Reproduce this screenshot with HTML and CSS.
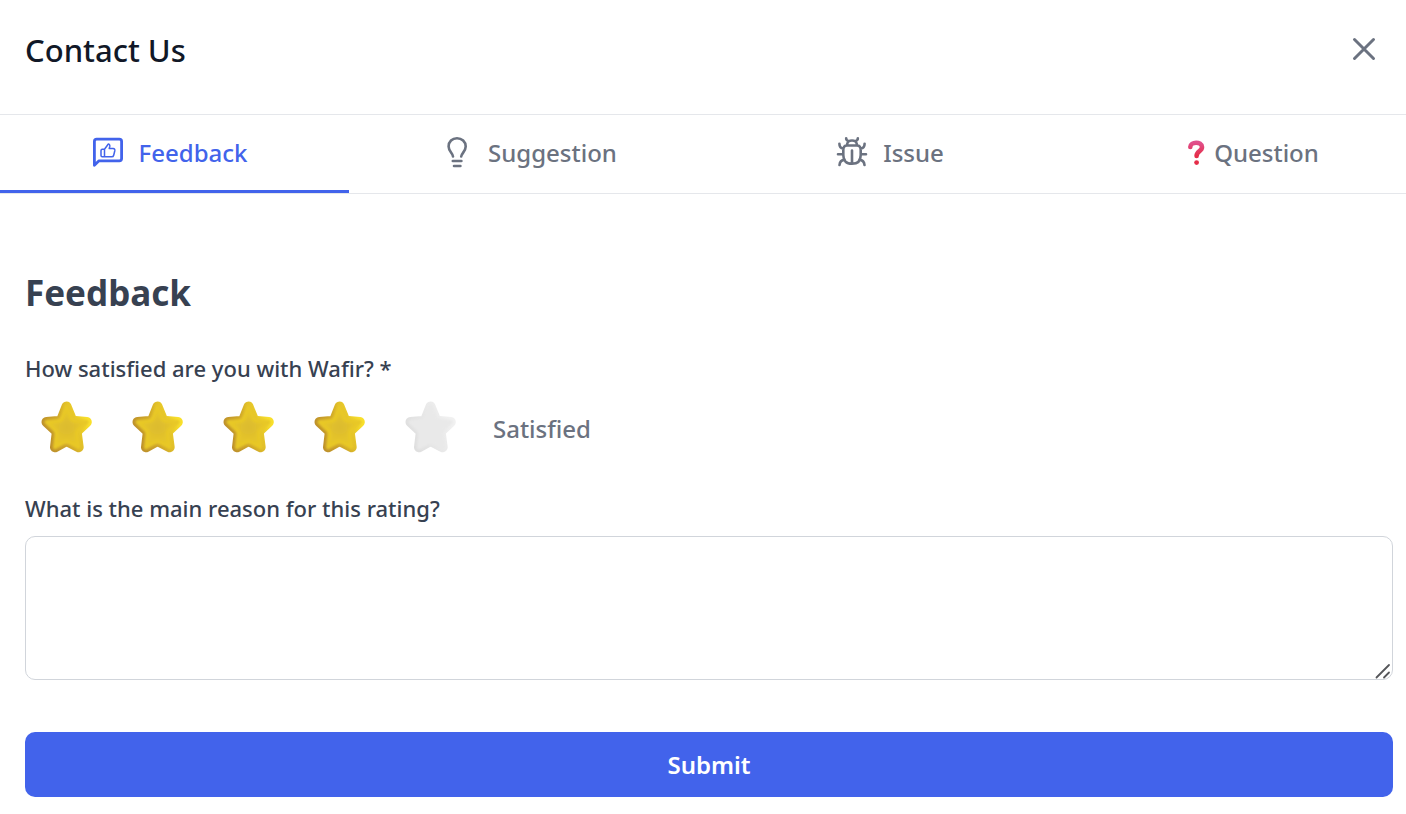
FILE: index.html
```
<!DOCTYPE html>
<html lang="en">
<head>
    <meta charset="UTF-8">
    <meta name="viewport" content="width=device-width, initial-scale=1.0">
    <title>Contact Us</title>
    <link rel="stylesheet" href="styles.css">
</head>
<body>
    <!-- Shared star shape -->
    <svg class="defs" width="0" height="0" aria-hidden="true">
        <defs>
            <linearGradient id="gold-edge" x1="0" y1="0.7" x2="1" y2="0.3">
                <stop offset="0" stop-color="#bd902c"/>
                <stop offset="0.5" stop-color="#d4ae2a"/>
                <stop offset="1" stop-color="#f9e02c"/>
            </linearGradient>
            <radialGradient id="gold-face">
                <stop offset="0" stop-color="#dcbb30"/>
                <stop offset="1" stop-color="#e8c827"/>
            </radialGradient>
            <linearGradient id="grey-edge" x1="0" y1="0.7" x2="1" y2="0.3">
                <stop offset="0" stop-color="#dfdfdf"/>
                <stop offset="1" stop-color="#f1f1f1"/>
            </linearGradient>
            <linearGradient id="mark-red" x1="0" y1="0" x2="0" y2="1">
                <stop offset="0" stop-color="#e0508c"/>
                <stop offset="1" stop-color="#e52d48"/>
            </linearGradient>
            <filter id="soften" x="-20%" y="-20%" width="140%" height="140%">
                <feGaussianBlur stdDeviation="1.3"/>
            </filter>
            <path id="star-shape" stroke-linejoin="round" d="M25.500 6.500L30 17.500Q31.200 20.700 34.500 21L45.800 22L37.800 29.500Q35.500 31.600 36 34.500L37.700 47.300L28 42.300Q25.500 41.200 23 42.300L14 47.300L15.500 34.500Q15.800 31.600 13.500 29.500L5.500 22L17 21Q20 20.700 21.200 17.500Z"/>
            <symbol id="star-gold" viewBox="0 0 52 54">
                <use href="#star-shape" fill="url(#gold-edge)" stroke="url(#gold-edge)" stroke-width="10"/>
                <use href="#star-shape" fill="url(#gold-face)" stroke="#e8c827" stroke-width="4" filter="url(#soften)"/>
            </symbol>
            <symbol id="star-grey" viewBox="0 0 52 54">
                <use href="#star-shape" fill="url(#grey-edge)" stroke="url(#grey-edge)" stroke-width="10"/>
                <use href="#star-shape" fill="#e9e9e9" stroke="#e9e9e9" stroke-width="4" filter="url(#soften)"/>
            </symbol>
        </defs>
    </svg>

    <header class="header">
        <h1>Contact Us</h1>
        <button class="close-btn" type="button" aria-label="Close">
            <svg width="24" height="24" viewBox="0 0 24 24" fill="none" stroke="currentColor" stroke-width="3" stroke-linecap="round">
                <path d="M2.500 2.500l19 19M21.500 2.500l-19 19"/>
            </svg>
        </button>
    </header>

    <nav class="tabs">
        <button class="tab active" type="button">
            <svg width="32" height="32" viewBox="0 0 32 32" fill="none" stroke="currentColor" stroke-linecap="round" stroke-linejoin="round">
                <path stroke-width="2.800" d="M2.400 29.200V5.500Q2.400 3.200 4.700 3.200H27.300Q29.600 3.200 29.600 5.500V22.500Q29.600 24.800 27.300 24.800H7Z"/>
                <path stroke-width="1.500" d="M12.500 13.200H10.200Q9 13.200 9 14.400V19.600Q9 20.800 10.200 20.800H12.500ZM12.500 13.200L15.800 8.700Q16.200 7.600 17.200 8.300Q18 9 17.800 10.200L17.200 12.600H21.200Q23.200 12.800 22.800 14.700L21.700 19.200Q21.300 20.800 19.700 20.800H12.500"/>
            </svg>
            <span>Feedback</span>
        </button>
        <button class="tab" type="button">
            <svg width="32" height="32" viewBox="0 0 32 32" fill="none" stroke="currentColor" stroke-width="2.600" stroke-linecap="round" stroke-linejoin="round">
                <path d="M12 20.500C12 17.500 7.600 15.500 7.600 10.500C7.600 5.600 11.200 2.200 16 2.200S24.700 5.600 24.700 10.500C24.700 15.500 20.300 17.500 20.200 20.500M11.800 25H20.400M13 30H19.400"/>
            </svg>
            <span>Suggestion</span>
        </button>
        <button class="tab" type="button">
            <svg width="32" height="32" viewBox="0 0 32 32" fill="none" stroke="currentColor" stroke-width="2.600" stroke-linecap="round" stroke-linejoin="round">
                <path d="M11 9.500H21Q24.700 9.500 24.700 14V19Q24.700 27.800 16 27.800T7.300 19V14Q7.300 9.500 11 9.500ZM11 9.200C11 2.900 21 2.900 21 9.200M10.200 2.200Q10 4.300 12.300 5M21.800 2.200Q22 4.300 19.700 5M16 14.500V27.500M7.300 18.300H2M24.700 18.300H30M7.300 12.500Q3.400 12 3.400 7.700M24.700 12.500Q28.600 12 28.600 7.700M8.600 23.600Q3.900 24.200 3.500 29M23.400 23.600Q28.100 24.200 28.500 29"/>
            </svg>
            <span>Issue</span>
        </button>
        <button class="tab tab-question" type="button">
            <svg width="20" height="28" viewBox="0 0 20 28" fill="none">
                <path stroke="url(#mark-red)" stroke-width="4.600" stroke-linecap="round" stroke-linejoin="round" d="M4.300 9C4.300 3.400 15.800 3.200 16 9C16.100 13.300 10.600 13 10.600 18"/>
                <circle cx="10.600" cy="24.600" r="2.400" fill="#e52d48"/>
            </svg>
            <span>Question</span>
        </button>
    </nav>

    <form class="form">
        <h2>Feedback</h2>

        <fieldset class="rating">
            <legend>How satisfied are you with Wafir? *</legend>
            <div class="rating-row">
                <div class="stars">
                    <label class="star"><input type="radio" name="rating" value="1" aria-label="1 star"><svg><use href="#star-gold"/></svg></label>
                    <label class="star"><input type="radio" name="rating" value="2" aria-label="2 stars"><svg><use href="#star-gold"/></svg></label>
                    <label class="star"><input type="radio" name="rating" value="3" aria-label="3 stars"><svg><use href="#star-gold"/></svg></label>
                    <label class="star"><input type="radio" name="rating" value="4" aria-label="4 stars" checked><svg><use href="#star-gold"/></svg></label>
                    <label class="star"><input type="radio" name="rating" value="5" aria-label="5 stars"><svg><use href="#star-grey"/></svg></label>
                </div>
                <span class="rating-text">Satisfied</span>
            </div>
        </fieldset>

        <label class="field-label" for="reason">What is the main reason for this rating?</label>
        <div class="textarea-wrap">
            <textarea id="reason" name="reason"></textarea>
            <svg class="grip" width="16" height="16" viewBox="0 0 16 16" fill="none" stroke="#55565a" stroke-width="1.800" stroke-linecap="round">
                <path d="M1.500 14.500L14 2M9 14.500L14 9.500"/>
            </svg>
        </div>

        <button class="submit-btn" type="submit">Submit</button>
    </form>
</body>
</html>
```
FILE: styles.css
```
* {
    box-sizing: border-box;
}
body {
    margin: 0;
    font-family: 'Noto Sans', 'Open Sans', sans-serif;
    background-color: #ffffff;
    color: #374151;
}
button, textarea {
    font-family: inherit;
}
.defs {
    position: absolute;
}
.header {
    display: flex;
    justify-content: space-between;
    align-items: center;
    height: 115px;
    padding: 0 30px 14px 25px;
    border-bottom: 1px solid #e5e7eb;
}
h1 {
    margin: 0;
    font-size: 31px;
    font-weight: 500;
    line-height: 40px;
    color: #111827;
}
.close-btn {
    display: flex;
    padding: 0 0 2px;
    border: none;
    background: none;
    color: #6b7280;
    cursor: pointer;
}
.tabs {
    display: grid;
    grid-template-columns: 349fr 370fr 352fr 335fr;
    height: 79px;
    border-bottom: 1px solid #e5e7eb;
}
.tab {
    display: flex;
    justify-content: center;
    align-items: center;
    gap: 15px;
    padding: 0 10px 1px 0;
    border: none;
    border-bottom: 3px solid transparent;
    background: none;
    color: #6b7280;
    font-size: 24px;
    font-weight: 500;
    cursor: pointer;
}
.tab.active {
    color: #4263eb;
    border-bottom-color: #4263eb;
}
.tab-question {
    gap: 8px;
    padding: 0 0 1px 28px;
}
.form {
    padding: 72px 13px 17px 25px;
}
h2 {
    margin: 0;
    font-size: 35px;
    font-weight: 700;
    line-height: 54px;
}
.rating {
    margin: 33px 0 0;
    padding: 0;
    border: none;
}
.rating legend, .field-label {
    display: block;
    padding: 0;
    font-size: 22px;
    font-weight: 500;
    line-height: 30px;
}
.rating-row {
    display: flex;
    align-items: center;
    gap: 36px;
    padding: 17px 0 0 16px;
}
.stars {
    display: flex;
    gap: 39px;
}
.star {
    position: relative;
    display: flex;
    cursor: pointer;
}
.star input {
    position: absolute;
    inset: 0;
    margin: 0;
    opacity: 0;
}
.star svg {
    width: 52px;
    height: 54px;
}
.rating-text {
    padding-top: 4px;
    color: #6b7280;
    font-size: 24px;
    font-weight: 500;
    line-height: 34px;
}
.field-label {
    margin-top: 39px;
}
.textarea-wrap {
    position: relative;
    display: flex;
    margin-top: 13px;
}
textarea {
    width: 100%;
    height: 144px;
    padding: 12px 16px;
    border: 1px solid #d1d5db;
    border-radius: 10px;
    font-size: 22px;
    color: #374151;
    resize: vertical;
}
textarea::-webkit-resizer {
    background: transparent;
}
.grip {
    position: absolute;
    right: 2px;
    bottom: 1px;
    pointer-events: none;
}
.submit-btn {
    width: 100%;
    height: 65px;
    margin-top: 52px;
    border: none;
    border-radius: 10px;
    background-color: #4263eb;
    color: #ffffff;
    font-size: 24px;
    font-weight: 600;
    cursor: pointer;
}
```
